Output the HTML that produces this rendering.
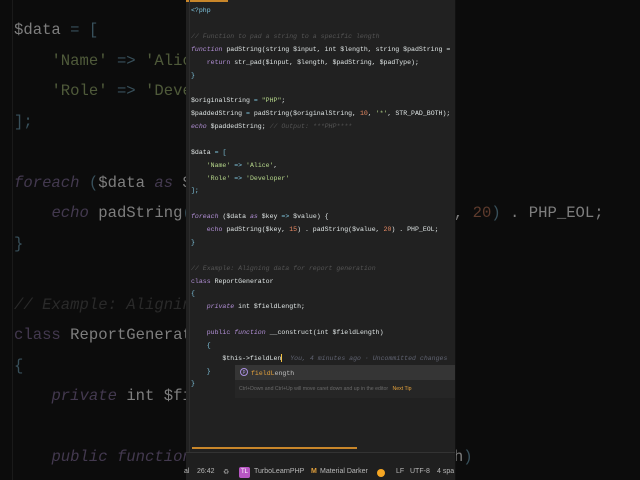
<!DOCTYPE html>
<html><head><meta charset="utf-8"><style>
*{margin:0;padding:0;box-sizing:border-box}
body{width:640px;height:480px;background:#0c0c0c;overflow:hidden;position:relative;font-family:"Liberation Mono",monospace}
.big{position:absolute;left:14px;font-size:15.6px;line-height:30.5px;height:30.5px;white-space:pre;color:#7e7e7e}
.sm{position:absolute;left:191px;font-size:6.55px;line-height:12.85px;height:12.85px;white-space:pre;color:#e0e6e6;margin-top:1.5px}
.panel{position:absolute;left:186px;top:0;width:269px;height:480px;background:#212121;overflow:hidden}
.c{color:#545454;font-style:italic}
.k{color:#b28fd6;font-style:italic}
.s{color:#b5d68a}
.n{color:#e88a64}
.p{color:#80c6e0}
.kn{color:#b28fd6}
.bc{color:#2a2a2a;font-style:italic}
.bk{color:#43394f;font-style:italic}
.bs{color:#4f5a3a}
.bp{color:#38505b}
.bn{color:#5e3b2d}
.bw{color:#7e7e7e}
.status{position:absolute;left:186px;top:452px;width:269px;height:28px;background:#1f1f1f;border-top:1px solid #333;font-family:"Liberation Sans",sans-serif;font-size:7px;color:#b8b8b8}
.status span{position:absolute;top:15px}
</style></head><body>
<div style="position:absolute;left:12px;top:0;width:1px;height:480px;background:#1a1a1a"></div>
<div class="big" style="top:15px"><span class="bw">$data</span> <span class="bp">=</span> <span class="bp">[</span></div>
<div class="big" style="top:46px">    <span class="bs">'Name'</span> <span class="bp">=&gt;</span> <span class="bs">'Alice'</span></div>
<div class="big" style="top:76px">    <span class="bs">'Role'</span> <span class="bp">=&gt;</span> <span class="bs">'Developer'</span></div>
<div class="big" style="top:107px"><span class="bp">];</span></div>
<div class="big" style="top:168px"><span class="bk">foreach</span> <span class="bp">(</span><span class="bw">$data</span> <span class="bk">as</span> <span class="bw">$key</span></div>
<div class="big" style="top:198px">    <span class="bk">echo</span> <span class="bw">padString</span><span class="bp">(</span><span class="bw">$key</span>, <span class="bn">15</span><span class="bp">)</span> . <span class="bw">padString</span><span class="bp">(</span><span class="bw">$value</span>, <span class="bn">20</span><span class="bp">)</span> . <span class="bw">PHP_EOL;</span></div>
<div class="big" style="top:229px"><span class="bp">}</span></div>
<div class="big" style="top:290px"><span class="bc">// Example: Aligning data for report generation</span></div>
<div class="big" style="top:320px"><span class="bk" style="font-style:normal">class</span> <span class="bw">ReportGenerator</span></div>
<div class="big" style="top:351px"><span class="bp">{</span></div>
<div class="big" style="top:381px">    <span class="bk">private</span> <span class="bw">int $fieldLength;</span></div>
<div class="big" style="top:442px">    <span class="bk">public</span> <span class="bk">function</span> <span class="bw">__construct(int $fieldLength</span><span class="bp">)</span></div>

<div class="panel">
<div style="position:absolute;left:0;top:0;width:42px;height:2px;background:#c8862a"></div>
<div style="position:absolute;left:3px;top:0;width:1px;height:452px;background:#2c2c2c"></div>
<div style="position:absolute;left:6px;top:447px;width:165px;height:2px;background:#c8862a"></div>
<div style="position:absolute;left:49px;top:365px;width:220px;height:33px;background:#262626"></div>
<div style="position:absolute;left:49px;top:365px;width:220px;height:15px;background:#353535"></div>
</div>
<div class="sm" style="top:3.5px"><span class="p">&lt;?php</span></div>
<div class="sm" style="top:29px"><span class="c">// Function to pad a string to a specific length</span></div>
<div class="sm" style="top:42px"><span class="k">function</span> padString(string $input, int $length, string $padString =</div>
<div class="sm" style="top:55px">    <span class="kn">return</span> str_pad($input, $length, $padString, $padType);</div>
<div class="sm" style="top:68px"><span class="p">}</span></div>
<div class="sm" style="top:93px">$originalString <span class="p">=</span> <span class="s">"PHP"</span>;</div>
<div class="sm" style="top:106px">$paddedString <span class="p">=</span> padString($originalString, <span class="n">10</span>, <span class="s">'*'</span>, STR_PAD_BOTH);</div>
<div class="sm" style="top:119px"><span class="k">echo</span> $paddedString; <span class="c">// Output: ***PHP****</span></div>
<div class="sm" style="top:145px">$data <span class="p">=</span> <span class="p">[</span></div>
<div class="sm" style="top:158px">    <span class="s">'Name'</span> <span class="p">=&gt;</span> <span class="s">'Alice'</span>,</div>
<div class="sm" style="top:171px">    <span class="s">'Role'</span> <span class="p">=&gt;</span> <span class="s">'Developer'</span></div>
<div class="sm" style="top:183px"><span class="p">];</span></div>
<div class="sm" style="top:209px"><span class="k">foreach</span> ($data <span class="k">as</span> $key <span class="p">=&gt;</span> $value) {</div>
<div class="sm" style="top:222px">    <span class="kn">echo</span> padString($key, <span class="n">15</span>) . padString($value, <span class="n">20</span>) . PHP_EOL;</div>
<div class="sm" style="top:235px"><span class="p">}</span></div>
<div class="sm" style="top:261px"><span class="c">// Example: Aligning data for report generation</span></div>
<div class="sm" style="top:274px"><span class="kn">class</span> ReportGenerator</div>
<div class="sm" style="top:286px"><span class="p">{</span></div>
<div class="sm" style="top:299px">    <span class="k">private</span> int $fieldLength;</div>
<div class="sm" style="top:325px">    <span class="kn">public</span> <span class="k">function</span> __construct(int $fieldLength)</div>
<div class="sm" style="top:338px">    <span class="p">{</span></div>
<div class="sm" style="top:351px">        $this-&gt;fieldLen<span style="display:inline-block;width:1px;height:8px;background:#f0c040;vertical-align:middle"></span> <span style="color:#5f6270;font-style:italic"> You, 4 minutes ago · Uncommitted changes</span></div>
<div class="sm" style="top:364px">    <span class="p">}</span></div>
<div class="sm" style="top:376px"><span class="p">}</span></div>
<div style="position:absolute;left:240px;top:368px;width:8px;height:8px;border:1px solid #a98fe0;border-radius:50%;font:5px 'Liberation Sans',sans-serif;color:#a98fe0;text-align:center;line-height:6px">p</div>
<div class="sm" style="left:251px;top:366px;color:#e2a03c">fieldL<span style="color:#c0c0c0">ength</span></div>
<div style="position:absolute;left:239px;top:386px;font:5.2px 'Liberation Sans',sans-serif;color:#6a6a6a;white-space:nowrap">Ctrl+Down and Ctrl+Up will move caret down and up in the editor <span style="color:#e2a03c;margin-left:3px">Next Tip</span></div>
<div style="position:absolute;left:455px;top:0;width:1px;height:480px;background:#111"></div>

<div class="status">
<span style="left:-2px">al</span>
<span style="left:11px">26:42</span>
<span style="left:37px;color:#999">&#9851;</span>
<span style="left:53px;top:14px;width:11px;height:11px;background:#b856c4;color:#fff;border-radius:2px;text-align:center;line-height:11px;font-size:6px">TL</span>
<span style="left:68px">TurboLearnPHP</span>
<span style="left:125px;color:#e2a03c;font-weight:bold">M</span>
<span style="left:134px">Material Darker</span>
<span style="left:191px;top:16px;width:8px;height:8px;border-radius:50%;background:#f5a623"></span>
<span style="left:210px">LF</span>
<span style="left:224px">UTF-8</span>
<span style="left:251px;white-space:nowrap">4 spa</span>
</div>
</body></html>
